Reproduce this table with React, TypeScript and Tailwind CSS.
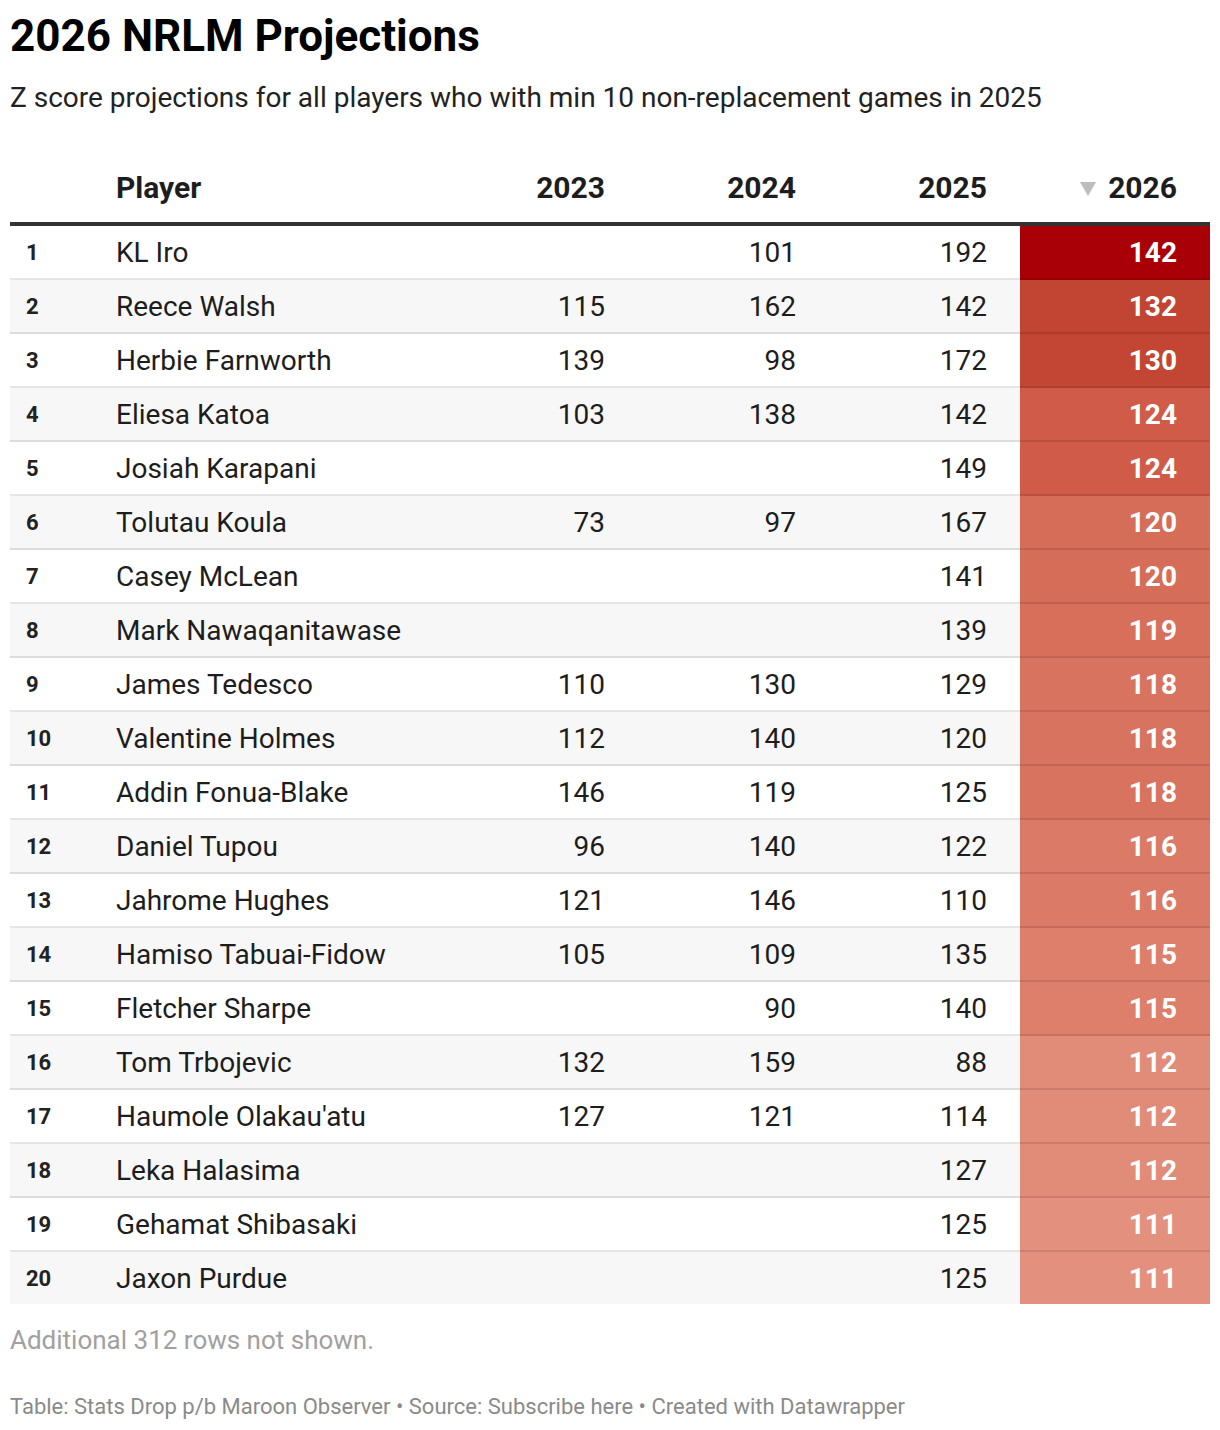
import React from 'react';

type Row = { rank: number; name: string; y23?: number; y24?: number; y25?: number; y26: number };

const rows: Row[] = [
  { rank: 1, name: 'KL Iro', y24: 101, y25: 192, y26: 142 },
  { rank: 2, name: 'Reece Walsh', y23: 115, y24: 162, y25: 142, y26: 132 },
  { rank: 3, name: 'Herbie Farnworth', y23: 139, y24: 98, y25: 172, y26: 130 },
  { rank: 4, name: 'Eliesa Katoa', y23: 103, y24: 138, y25: 142, y26: 124 },
  { rank: 5, name: 'Josiah Karapani', y25: 149, y26: 124 },
  { rank: 6, name: 'Tolutau Koula', y23: 73, y24: 97, y25: 167, y26: 120 },
  { rank: 7, name: 'Casey McLean', y25: 141, y26: 120 },
  { rank: 8, name: 'Mark Nawaqanitawase', y25: 139, y26: 119 },
  { rank: 9, name: 'James Tedesco', y23: 110, y24: 130, y25: 129, y26: 118 },
  { rank: 10, name: 'Valentine Holmes', y23: 112, y24: 140, y25: 120, y26: 118 },
  { rank: 11, name: 'Addin Fonua-Blake', y23: 146, y24: 119, y25: 125, y26: 118 },
  { rank: 12, name: 'Daniel Tupou', y23: 96, y24: 140, y25: 122, y26: 116 },
  { rank: 13, name: 'Jahrome Hughes', y23: 121, y24: 146, y25: 110, y26: 116 },
  { rank: 14, name: 'Hamiso Tabuai-Fidow', y23: 105, y24: 109, y25: 135, y26: 115 },
  { rank: 15, name: 'Fletcher Sharpe', y24: 90, y25: 140, y26: 115 },
  { rank: 16, name: 'Tom Trbojevic', y23: 132, y24: 159, y25: 88, y26: 112 },
  { rank: 17, name: "Haumole Olakau'atu", y23: 127, y24: 121, y25: 114, y26: 112 },
  { rank: 18, name: 'Leka Halasima', y25: 127, y26: 112 },
  { rank: 19, name: 'Gehamat Shibasaki', y25: 125, y26: 111 },
  { rank: 20, name: 'Jaxon Purdue', y25: 125, y26: 111 },
];

// heat colours for the 2026 column
const heat: Record<number, string> = {
  142: 'bg-[#a80006]',
  132: 'bg-[#c24432]',
  130: 'bg-[#c34634]',
  124: 'bg-[#cf5b48]',
  120: 'bg-[#d66d59]',
  119: 'bg-[#d76f5b]',
  118: 'bg-[#d87360]',
  116: 'bg-[#db7a66]',
  115: 'bg-[#dd7f6b]',
  112: 'bg-[#e18b79]',
  111: 'bg-[#e3907e]',
};

const cols = 'grid grid-cols-[90px_347px_191px_191px_191px_190px]';

export default function App() {
  return (
    <div className="min-h-screen bg-white px-[10px] pt-[8px] text-[#1d1d1d]" style={{ fontFamily: 'Roboto, "Noto Sans", sans-serif' }}>
      {/* Title */}
      <h1 className="text-[44px] font-bold leading-[56px] text-black">2026 NRLM Projections</h1>
      <p className="mt-[16px] text-[28px] leading-[36px] text-[#222]">
        Z score projections for all players who with min 10 non-replacement games in 2025
      </p>

      {/* Table */}
      <div className="mt-[34px] w-[1200px]">
        <div className={`${cols} h-[76px] items-center border-b-4 border-[#333] pt-[2px] text-[30px] font-bold`}>
          <div />
          <div className="pl-[16px]">Player</div>
          <div className="pr-[33px] text-right">2023</div>
          <div className="pr-[33px] text-right">2024</div>
          <div className="pr-[33px] text-right">2025</div>
          <div className="flex items-center justify-end gap-[12px] pr-[33px]">
            <svg width="16" height="14" viewBox="0 0 16 14" className="mt-[4px]">
              <path d="M0 0 H16 L8 14 Z" fill="#bdbdbd" />
            </svg>
            <span>2026</span>
          </div>
        </div>

        {rows.map((r, i) => {
          const last = i === rows.length - 1;
          return (
            <div
              key={r.rank}
              className={`${cols} ${last ? 'h-[52px]' : 'h-[54px] border-b-2 border-black/10'} items-stretch pt-[1px] ${i % 2 === 1 ? 'bg-[#f7f7f7]' : 'bg-white'}`}
            >
              <div className="flex items-center pl-[16px] text-[22px] font-bold text-[#222]">{r.rank}</div>
              <div className="flex items-center pl-[16px] text-[28px]">{r.name}</div>
              <div className="flex items-center justify-end pr-[33px] text-[28px]">{r.y23 ?? ''}</div>
              <div className="flex items-center justify-end pr-[33px] text-[28px]">{r.y24 ?? ''}</div>
              <div className="flex items-center justify-end pr-[33px] text-[28px]">{r.y25 ?? ''}</div>
              <div className={`-mt-[1px] flex items-center justify-end pt-[1px] pr-[33px] text-[28px] font-bold text-white ${heat[r.y26]} ${last ? '' : '-mb-[2px] border-b-2 border-black/10'}`}>
                {r.y26}
              </div>
            </div>
          );
        })}
      </div>

      <p className="mt-[20px] text-[26px] leading-[32px] text-[#a0a0a0]">Additional 312 rows not shown.</p>

      <p className="mt-[37px] text-[22px] leading-[28px] text-[#8a8a8a]">
        Table: Stats Drop p/b Maroon Observer • Source: Subscribe here • Created with Datawrapper
      </p>
    </div>
  );
}
